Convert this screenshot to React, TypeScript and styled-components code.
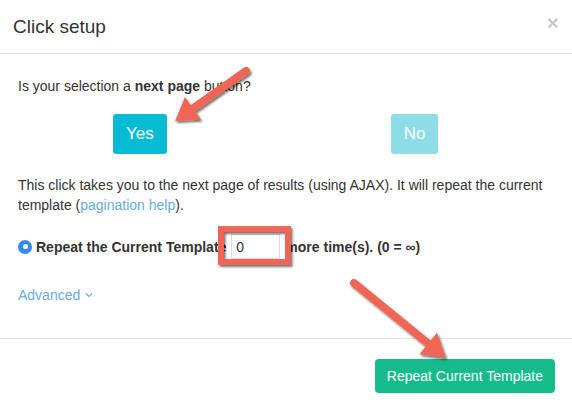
import React from "react";
import styled, { createGlobalStyle } from "styled-components";

const Global = createGlobalStyle`
  html, body { margin: 0; padding: 0; background: #fff; }
  body { font-family: "Liberation Sans", Arial, Helvetica, sans-serif; color: #333; }
  * { box-sizing: border-box; }
`;

const Modal = styled.div`
  position: relative;
  width: 572px;
  height: 411px;
  background: #fff;
  display: flex;
  flex-direction: column;
`;

const Header = styled.div`
  display: flex;
  justify-content: space-between;
  align-items: flex-start;
  padding: 15px 13px 15px 13px;
  border-bottom: 1px solid #e5e5e5;
`;

const Title = styled.h4`
  margin: 0;
  font-size: 19px;
  line-height: 23px;
  font-weight: 400;
  color: #333;
`;

const Close = styled.button`
  border: 0;
  background: none;
  padding: 0;
  margin-top: -4px;
  font-family: "Liberation Sans", Arial, sans-serif;
  font-size: 21px;
  font-weight: 700;
  line-height: 23px;
  color: #000;
  opacity: 0.22;
  cursor: pointer;
`;

const Body = styled.div`
  padding: 0 18px 33px;
  font-size: 14px;
  line-height: 20px;
`;

const Question = styled.p`
  margin: 22px 0 0;
`;

const ChoiceRow = styled.div`
  display: flex;
  gap: 224px;
  margin-top: 18px;
  padding-left: 95px;
`;

const ChoiceButton = styled.button<{ $muted?: boolean }>`
  height: 40px;
  padding: 0 13px;
  border: 0;
  border-radius: 3px;
  background: ${(p) => (p.$muted ? "#8ddce8" : "#08bbd5")};
  color: #fff;
  font-family: "Liberation Sans", Arial, sans-serif;
  font-size: 17px;
  line-height: 20px;
  cursor: pointer;
`;

const Para = styled.p`
  margin: 21px 0 0;
`;

const Link = styled.a`
  color: #66ade0;
  text-decoration: none;
`;

const RepeatRow = styled.div`
  display: flex;
  align-items: center;
  height: 25px;
  margin-top: 19px;
  font-weight: 700;
`;

const Radio = styled.span`
  width: 14px;
  height: 14px;
  border-radius: 50%;
  background: #3a86f4;
  display: flex;
  align-items: center;
  justify-content: center;
  margin-right: 4px;
  flex: none;
  &::after {
    content: "";
    width: 5px;
    height: 5px;
    border-radius: 50%;
    background: #fff;
  }
`;

const CountInput = styled.input`
  width: 49px;
  height: 25px;
  margin: 0 5px;
  padding: 0 4px;
  border: 1px solid #dcdcdc;
  font-family: "Liberation Sans", Arial, sans-serif;
  font-size: 14px;
  color: #333;
  outline: none;
`;

const AdvancedWrap = styled.div`
  margin-top: 26px;
`;

const Chevron = styled.svg`
  margin-left: 5px;
  vertical-align: 2px;
`;

const Footer = styled.div`
  margin-top: auto;
  display: flex;
  justify-content: flex-end;
  padding: 20px 17px 18px;
  border-top: 1px solid #e5e5e5;
`;

const PrimaryButton = styled.button`
  height: 34px;
  padding: 0 12px;
  border: 0;
  border-radius: 4px;
  background: #16bb8b;
  color: #fff;
  font-family: "Liberation Sans", Arial, sans-serif;
  font-size: 14px;
  line-height: 20px;
  cursor: pointer;
`;

const Annotations = styled.svg`
  position: absolute;
  left: 0;
  top: 0;
  width: 572px;
  height: 411px;
  pointer-events: none;
`;

const ARROW = "#ef6556";

function Arrow({ tail, tip, headLen, headHalf }: { tail: [number, number]; tip: [number, number]; headLen: number; headHalf: number }) {
  const dx = tip[0] - tail[0];
  const dy = tip[1] - tail[1];
  const len = Math.hypot(dx, dy);
  const ux = dx / len;
  const uy = dy / len;
  const px = -uy;
  const py = ux;
  const bx = tip[0] - ux * headLen;
  const by = tip[1] - uy * headLen;
  const w1 = [bx + px * headHalf, by + py * headHalf];
  const w2 = [bx - px * headHalf, by - py * headHalf];
  return (
    <g filter="url(#shadow)">
      <line x1={tail[0]} y1={tail[1]} x2={bx + ux * 2} y2={by + uy * 2} stroke={ARROW} strokeWidth={8} strokeLinecap="round" />
      <polygon points={`${tip[0]},${tip[1]} ${w1[0]},${w1[1]} ${w2[0]},${w2[1]}`} fill={ARROW} />
    </g>
  );
}

export default function App() {
  return (
    <>
      <Global />
      <Modal>
        <Header>
          <Title>Click setup</Title>
          <Close aria-label="Close">×</Close>
        </Header>
        <Body>
          <Question>
            Is your selection a <b>next page</b> button?
          </Question>
          <ChoiceRow>
            <ChoiceButton>Yes</ChoiceButton>
            <ChoiceButton $muted>No</ChoiceButton>
          </ChoiceRow>
          <Para>
            This click takes you to the next page of results (using AJAX). It will repeat the current template (
            <Link href="#">pagination help</Link>).
          </Para>
          <RepeatRow>
            <Radio />
            <span>Repeat the Current Template</span>
            <CountInput defaultValue="0" />
            <span>more time(s). (0 = ∞)</span>
          </RepeatRow>
          <AdvancedWrap>
            <Link href="#">
              Advanced
              <Chevron width="8" height="6" viewBox="0 0 8 6">
                <path d="M1 1.5 L4 4.5 L7 1.5" fill="none" stroke="#66ade0" strokeWidth="1.2" />
              </Chevron>
            </Link>
          </AdvancedWrap>
        </Body>
        <Footer>
          <PrimaryButton>Repeat Current Template</PrimaryButton>
        </Footer>
        <Annotations viewBox="0 0 572 411">
          <defs>
            <filter id="shadow" x="-20%" y="-20%" width="140%" height="140%">
              <feDropShadow dx="1.5" dy="2" stdDeviation="1.2" floodColor="#000" floodOpacity="0.55" />
            </filter>
          </defs>
          <Arrow tail={[246, 71]} tip={[175, 121]} headLen={22} headHalf={14} />
          <Arrow tail={[354, 283]} tip={[446, 358]} headLen={23} headHalf={14} />
          <rect x={221} y={229} width={67} height={33} fill="none" stroke={ARROW} strokeWidth={6} filter="url(#shadow)" />
        </Annotations>
      </Modal>
    </>
  );
}
